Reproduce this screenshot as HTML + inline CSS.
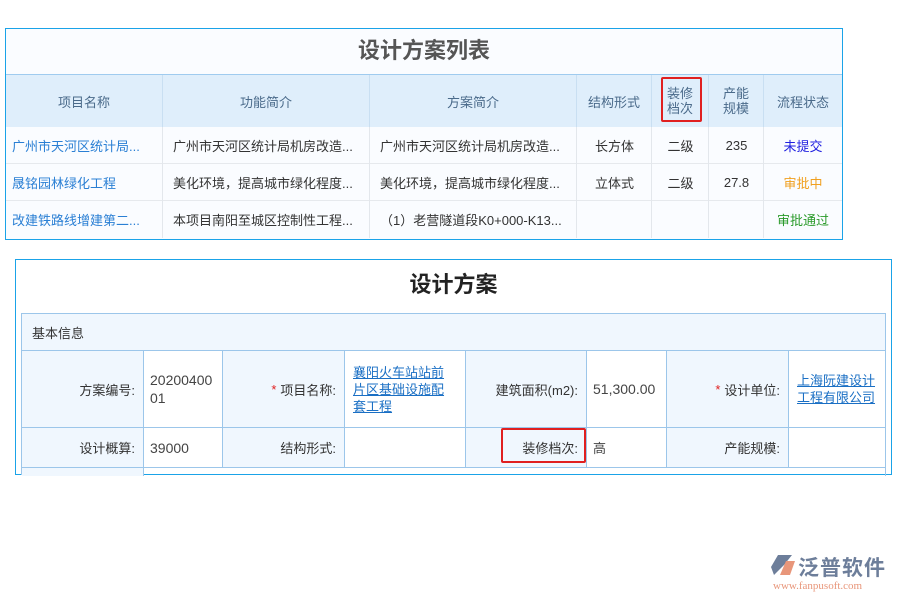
<!DOCTYPE html>
<html><head><meta charset="utf-8"><style>
*{margin:0;padding:0;box-sizing:border-box}
body{width:900px;height:600px;background:#fff;position:relative;overflow:hidden;font-family:"Liberation Sans","Noto Sans CJK SC",sans-serif;font-size:13px;color:#333}
.a{position:absolute}
.t1{left:5px;top:28px;width:838px;height:212px;border:1px solid #1aa3e8;background:#fafcff}
.c{position:absolute;display:flex;align-items:center;justify-content:center;text-align:center;white-space:nowrap}
.l{justify-content:flex-start;padding-left:6px}
.h{background:#dfeefb;color:#4a6a8a;border-right:1px solid #c9dff2}
.vl{position:absolute;width:1px;background:#e3e7ec}
.hl{position:absolute;height:1px;background:#e6e9ed}
.t2{left:15px;top:259px;width:877px;height:216px;border:1px solid #1aa3e8;background:#fff}
.bc{position:absolute;border-right:1px solid #9cc6ea;border-bottom:1px solid #9cc6ea;display:flex;align-items:center;font-size:13px}
.lab{background:#f0f7fe;justify-content:flex-end;padding-right:8px;color:#333}
.val{padding-left:6px;color:#444}
a{color:#1a6fc4;text-decoration:underline}
</style></head><body>
<div class="a t1">
<div class="c" style="left:0;top:0;width:836px;height:40px;font-size:22px;font-weight:bold;color:#555">设计方案列表</div>
<div class="a" style="left:0;top:45px;width:836px;height:53px;background:#dfeefb;border-top:1px solid #9fcbef;border-bottom:1px solid #c9dff2"></div>
</div>
<div class="a" style="left:6px;top:74px;width:836px;height:164px">
<div class="c h" style="left:0;top:1px;width:157px;height:52px">项目名称</div>
<div class="c h" style="left:157px;top:1px;width:207px;height:52px">功能简介</div>
<div class="c h" style="left:364px;top:1px;width:207px;height:52px">方案简介</div>
<div class="c h" style="left:571px;top:1px;width:75px;height:52px">结构形式</div>
<div class="c h" style="left:646px;top:1px;width:57px;height:52px;line-height:15px;white-space:normal;padding:0 14px">装修档次</div>
<div class="c h" style="left:703px;top:1px;width:55px;height:52px;line-height:15px;white-space:normal;padding:0 13px">产能规模</div>
<div class="c h" style="left:758px;top:1px;width:78px;height:52px;border-right:none">流程状态</div>
<div class="hl" style="left:0;top:89px;width:836px"></div>
<div class="hl" style="left:0;top:126px;width:836px"></div>
<div class="vl" style="left:156px;top:53px;height:111px"></div>
<div class="vl" style="left:363px;top:53px;height:111px"></div>
<div class="vl" style="left:570px;top:53px;height:111px"></div>
<div class="vl" style="left:645px;top:53px;height:111px"></div>
<div class="vl" style="left:702px;top:53px;height:111px"></div>
<div class="vl" style="left:757px;top:53px;height:111px"></div>
<div class="c l" style="left:0;top:53px;height:36px;color:#2a7fd4">广州市天河区统计局...</div>
<div class="c l" style="left:0;top:90px;height:36px;color:#2a7fd4">晟铭园林绿化工程</div>
<div class="c l" style="left:0;top:127px;height:36px;color:#2a7fd4">改建铁路线增建第二...</div>
<div class="c l" style="left:161px;top:53px;height:36px">广州市天河区统计局机房改造...</div>
<div class="c l" style="left:161px;top:90px;height:36px">美化环境，提高城市绿化程度...</div>
<div class="c l" style="left:161px;top:127px;height:36px">本项目南阳至城区控制性工程...</div>
<div class="c l" style="left:368px;top:53px;height:36px">广州市天河区统计局机房改造...</div>
<div class="c l" style="left:368px;top:90px;height:36px">美化环境，提高城市绿化程度...</div>
<div class="c l" style="left:368px;top:127px;height:36px">（1）老营隧道段K0+000-K13...</div>
<div class="c" style="left:571px;top:53px;width:75px;height:36px">长方体</div>
<div class="c" style="left:571px;top:90px;width:75px;height:36px">立体式</div>
<div class="c" style="left:646px;top:53px;width:57px;height:36px">二级</div>
<div class="c" style="left:646px;top:90px;width:57px;height:36px">二级</div>
<div class="c" style="left:703px;top:53px;width:55px;height:36px">235</div>
<div class="c" style="left:703px;top:90px;width:55px;height:36px">27.8</div>
<div class="c" style="left:758px;top:53px;width:78px;height:36px;color:#2020e0">未提交</div>
<div class="c" style="left:758px;top:90px;width:78px;height:36px;color:#f0a020">审批中</div>
<div class="c" style="left:758px;top:127px;width:78px;height:36px;color:#2a9a2a">审批通过</div>
</div>
<div class="a" style="left:661px;top:77px;width:41px;height:45px;border:2px solid #e02020;border-radius:2px"></div>

<div class="a t2">
<div class="c" style="left:0;top:0;width:875px;height:46px;font-size:22px;font-weight:bold;color:#222">设计方案</div>
</div>
<div class="a" style="left:21px;top:313px;width:865px;height:162px;border-left:1px solid #9cc6ea;border-top:1px solid #9cc6ea">
<div class="bc lab" style="left:0;top:0;width:864px;height:37px;justify-content:flex-start;padding-left:10px">基本信息</div>
<div class="bc lab" style="left:0;top:37px;width:122px;height:77px">方案编号:</div>
<div class="bc val" style="left:122px;top:37px;width:79px;height:77px;line-height:18px;word-break:break-all;padding-right:8px;font-size:14px">2020040001</div>
<div class="bc lab" style="left:201px;top:37px;width:122px;height:77px"><span style="color:#e02020;margin-right:4px">*</span>项目名称:</div>
<div class="bc val" style="left:323px;top:37px;width:121px;height:77px;line-height:17px;padding-left:8px;padding-right:18px"><a>襄阳火车站站前片区基础设施配套工程</a></div>
<div class="bc lab" style="left:444px;top:37px;width:121px;height:77px">建筑面积(m2):</div>
<div class="bc val" style="left:565px;top:37px;width:80px;height:77px;font-size:14px">51,300.00</div>
<div class="bc lab" style="left:645px;top:37px;width:122px;height:77px"><span style="color:#e02020;margin-right:4px">*</span>设计单位:</div>
<div class="bc val" style="left:767px;top:37px;width:97px;height:77px;line-height:17px;padding-left:8px;padding-right:6px"><a>上海阮建设计工程有限公司</a></div>
<div class="bc lab" style="left:0;top:114px;width:122px;height:40px">设计概算:</div>
<div class="bc val" style="left:122px;top:114px;width:79px;height:40px;font-size:14px">39000</div>
<div class="bc lab" style="left:201px;top:114px;width:122px;height:40px">结构形式:</div>
<div class="bc val" style="left:323px;top:114px;width:121px;height:40px"></div>
<div class="bc lab" style="left:444px;top:114px;width:121px;height:40px">装修档次:</div>
<div class="bc val" style="left:565px;top:114px;width:80px;height:40px">高</div>
<div class="bc lab" style="left:645px;top:114px;width:122px;height:40px">产能规模:</div>
<div class="bc val" style="left:767px;top:114px;width:97px;height:40px"></div>
<div class="bc lab" style="left:0;top:154px;width:122px;height:8px;border-bottom:none"></div>
<div class="bc val" style="left:122px;top:154px;width:742px;height:8px;border-bottom:none;border-right:1px solid #9cc6ea"></div>
</div>
<div class="a" style="left:501px;top:428px;width:85px;height:35px;border:2px solid #e02020;border-radius:2px"></div>

<div class="a" style="left:770px;top:553px;width:26px;height:26px">
<svg width="26" height="26" viewBox="0 0 26 26"><path d="M8 2 L22 2 L14 12 L4 22 L1 14 Z" fill="#6d7e9a"/><path d="M16 8 L25 8 L20 22 L10 22 Z" fill="#e8967a"/></svg>
</div>
<div class="a" style="left:798px;top:552px;font-size:21px;font-weight:bold;color:#6d7e9a;letter-spacing:1px">泛普软件</div>
<div class="a" style="left:773px;top:580px;font-size:11px;font-family:'Liberation Serif',serif;color:#e8967a">www.fanpusoft.com</div>
</body></html>
